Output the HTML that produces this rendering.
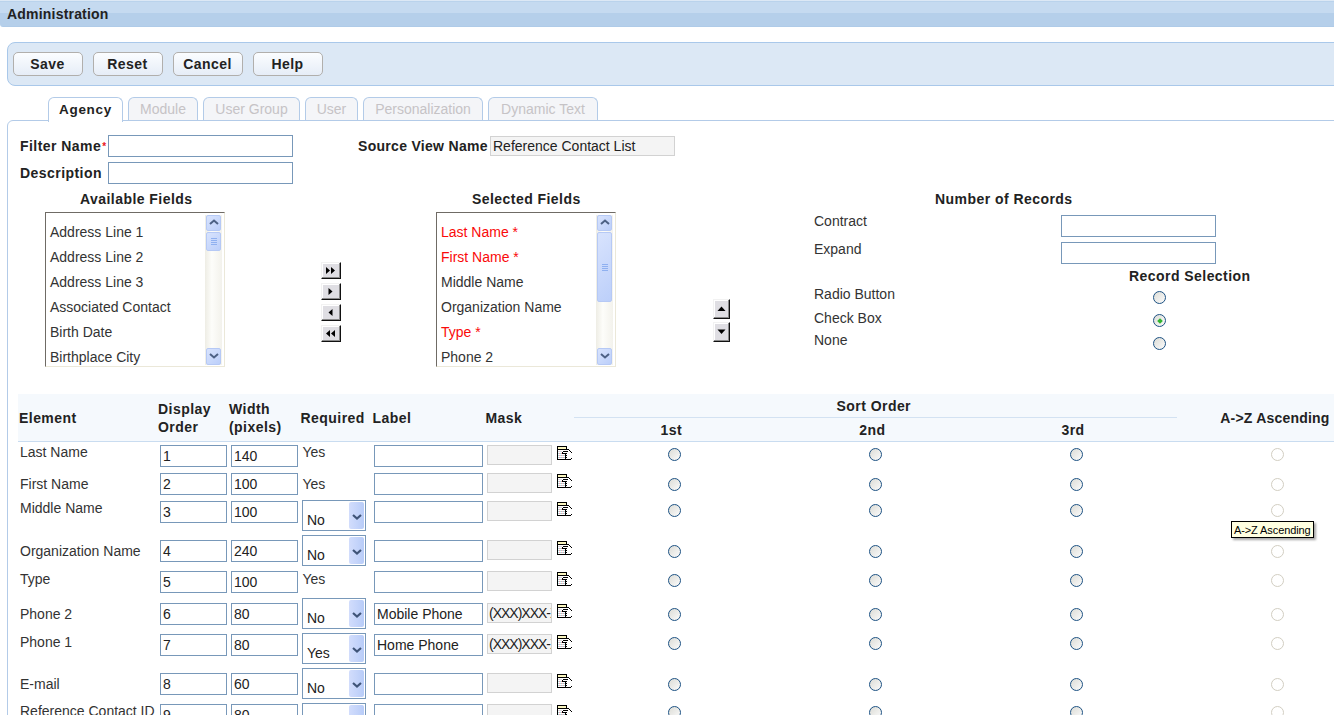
<!DOCTYPE html><html><head><meta charset="utf-8"><style>
*{box-sizing:border-box;margin:0;padding:0}
html,body{width:1334px;height:715px;overflow:hidden;background:#fff;font-family:"Liberation Sans",sans-serif;font-size:14px;color:#333}
.a{position:absolute;white-space:nowrap;line-height:16px}
.b{position:absolute;white-space:nowrap;font-weight:bold;font-size:14px;line-height:15px;letter-spacing:0.45px;color:#222}
#hdr{position:absolute;left:0;top:0;width:1334px;height:27px;background:linear-gradient(#bad3ec 0,#bad3ec 1px,#c5daf0 1px,#c5daf0 12px,#b5cfea 12px,#b5cfea 25px,#afcbe8 25px);border-top:1px solid #dce8f5;border-bottom-left-radius:3px}
#hdr span{position:absolute;left:7px;top:5px;font-weight:bold;font-size:14px;line-height:16px;color:#222;letter-spacing:0.2px}
#tb{position:absolute;left:7px;top:42px;width:1400px;height:44px;background:#dce8f5;border:1px solid #a9c8ea;border-radius:8px}
.btn{position:absolute;top:52px;width:70px;height:24px;border:1px solid #b1afac;border-radius:5px;background:linear-gradient(#fbfdff,#e6edf7);font-weight:bold;font-size:14px;letter-spacing:0.45px;color:#222;text-align:center;line-height:23px;padding-right:1px}
.tab{position:absolute;top:97px;height:23px;border:1px solid #b3cbe8;border-bottom:none;border-radius:6px 6px 0 0;background:#f4f5f8;color:#c6c3c6;font-size:14px;text-align:center;line-height:16px;padding-top:3px}
.tab.act{background:#fff;color:#222;font-weight:bold;font-size:13.5px;letter-spacing:0.7px;height:25px;z-index:2;line-height:15px;padding-top:4px}
#panel{position:absolute;left:7px;top:120px;width:1400px;height:700px;border:1px solid #b3cbe8;border-radius:6px 0 0 0;background:#fff}
.in{position:absolute;border:1px solid #7898b9;background:#fff;height:22px;font-size:14px;color:#222;padding-left:2px;line-height:20px;white-space:nowrap;overflow:hidden}
.ro{position:absolute;border:1px solid #d2d2d2;background:#f4f4f4;height:20px;font-size:14px;color:#222;padding-left:1px;line-height:18px;overflow:hidden;white-space:nowrap}
.lb{position:absolute;border:1px solid #6f6b65;border-right-color:#ebe8d9;border-bottom-color:#ebe8d9;background:#fff;overflow:hidden}
.lb .it{position:absolute;left:4px;font-size:14px;line-height:16px;color:#333;white-space:nowrap}
.red{color:#fa0a0a !important}
.sb{position:absolute;left:159px;top:2px;width:17px;bottom:1px;background:linear-gradient(90deg,#eeede5,#fdfdfa 40%,#f3f2ec)}
.sbb{position:absolute;left:1px;width:15px;border:1px solid #b6c9f5;border-radius:2px;background:linear-gradient(135deg,#d8e3fd,#bccffa)}
.arb{position:absolute;width:20px;height:17px;border-top:1px solid #f2f2f2;border-left:1px solid #f2f2f2;border-right:1px solid #111;border-bottom:1px solid #111;background:#dfdee3;box-shadow:inset -1px -1px 0 #8a8a8a,inset 1px 1px 0 #fff}
.rad{position:absolute;width:13px;height:13px;border-radius:50%;border:1px solid #1d5283;background:linear-gradient(135deg,#dcdcd6,#fbfbfb)}
.rad.dis{border-color:#d2cec2;background:#fff}
.sel{position:absolute;width:64px;height:31px;border:1px solid #7898b9;background:#fff;font-size:14px;color:#222}
.sel span{position:absolute;left:4px;line-height:16px}
.sel i{position:absolute;left:46px;top:1px;width:15px;height:27px;border-radius:2px;background:linear-gradient(90deg,#d2ddfc,#b8ccf8)}
.ico{position:absolute;width:16px;height:15px}
#hd{position:absolute;left:18px;top:394px;width:1320px;height:48px;background:#f5f9fd;border-bottom:1px solid #c9dcf0}
</style></head><body>
<div id="hdr"><span>Administration</span></div>
<div id="tb"></div>
<div class="btn" style="left:13px">Save</div>
<div class="btn" style="left:93px">Reset</div>
<div class="btn" style="left:173px">Cancel</div>
<div class="btn" style="left:253px">Help</div>
<div id="panel"></div>
<div class="tab act" style="left:48px;width:75px">Agency</div>
<div class="tab" style="left:128px;width:70px">Module</div>
<div class="tab" style="left:203px;width:97px">User Group</div>
<div class="tab" style="left:305px;width:53px">User</div>
<div class="tab" style="left:363px;width:120px">Personalization</div>
<div class="tab" style="left:488px;width:110px">Dynamic Text</div>
<div class="b" style="left:20px;top:138.5px;">Filter Name<span style="color:#e8161e;font-size:10px;position:relative;top:-1px;left:1px;letter-spacing:0">*</span></div>
<div class="in" style="left:108px;top:135px;width:185px"></div>
<div class="b" style="left:20px;top:165.7px;">Description</div>
<div class="in" style="left:108px;top:162px;width:185px"></div>
<div class="b" style="left:358px;top:138.9px;letter-spacing:0.3px">Source View Name</div>
<div class="ro" style="left:490px;top:136px;width:185px;line-height:18px;padding-left:2px">Reference Contact List</div>
<div class="b" style="left:80px;top:191.8px;">Available Fields</div>
<div class="lb" style="left:45px;top:212px;width:180px;height:155px">
<div class="it" style="top:11px">Address Line 1</div>
<div class="it" style="top:36px">Address Line 2</div>
<div class="it" style="top:61px">Address Line 3</div>
<div class="it" style="top:86px">Associated Contact</div>
<div class="it" style="top:111px">Birth Date</div>
<div class="it" style="top:136px">Birthplace City</div>
<div class="sb">
<div class="sbb" style="top:0px;height:16px"><svg style="position:absolute;left:1.5px;top:3px" width="10" height="6"><path d="M1 5 L5 1.5 L9 5" stroke="#4d6185" stroke-width="2" fill="none"/></svg></div>
<div class="sbb" style="top:17px;height:19px"><svg style="position:absolute;left:3.5px;top:4px" width="7" height="9"><path d="M0 1.5H6M0 3.5H6M0 5.5H6M0 7.5H6" stroke="#8fb0f0" stroke-width="1"/></svg></div>
<div class="sbb" style="top:133px;height:17px"><svg style="position:absolute;left:1.5px;top:4px" width="10" height="7"><path d="M1 1 L5 4.5 L9 1" stroke="#4d6185" stroke-width="2" fill="none"/></svg></div>
</div></div>
<div class="b" style="left:472px;top:191.8px;">Selected Fields</div>
<div class="lb" style="left:436px;top:212px;width:180px;height:155px">
<div class="it red" style="top:11px">Last Name *</div>
<div class="it red" style="top:36px">First Name *</div>
<div class="it" style="top:61px">Middle Name</div>
<div class="it" style="top:86px">Organization Name</div>
<div class="it red" style="top:111px">Type *</div>
<div class="it" style="top:136px">Phone 2</div>
<div class="sb">
<div class="sbb" style="top:0px;height:16px"><svg style="position:absolute;left:1.5px;top:3px" width="10" height="6"><path d="M1 5 L5 1.5 L9 5" stroke="#4d6185" stroke-width="2" fill="none"/></svg></div>
<div class="sbb" style="top:17px;height:70px"><svg style="position:absolute;left:3.5px;top:30px" width="7" height="9"><path d="M0 1.5H6M0 3.5H6M0 5.5H6M0 7.5H6" stroke="#8fb0f0" stroke-width="1"/></svg></div>
<div class="sbb" style="top:133px;height:17px"><svg style="position:absolute;left:1.5px;top:4px" width="10" height="7"><path d="M1 1 L5 4.5 L9 1" stroke="#4d6185" stroke-width="2" fill="none"/></svg></div>
</div></div>
<div class="arb" style="left:321px;top:262px"><svg style="position:absolute;left:0;top:0" width="18" height="15"><path d="M4 4 L8 7.5 L4 11 ZM9 4 L13 7.5 L9 11 Z" fill="#000"/></svg></div>
<div class="arb" style="left:321px;top:283px"><svg style="position:absolute;left:0;top:0" width="18" height="15"><path d="M6.5 4 L10.5 7.5 L6.5 11 Z" fill="#000"/></svg></div>
<div class="arb" style="left:321px;top:304px"><svg style="position:absolute;left:0;top:0" width="18" height="15"><path d="M10.5 4 L6.5 7.5 L10.5 11 Z" fill="#000"/></svg></div>
<div class="arb" style="left:321px;top:325px"><svg style="position:absolute;left:0;top:0" width="18" height="15"><path d="M8 4 L4 7.5 L8 11 ZM13 4 L9 7.5 L13 11 Z" fill="#000"/></svg></div>
<div class="arb" style="left:713px;top:299px;width:17px;height:20px"><svg style="position:absolute;left:0;top:0" width="15" height="18"><path d="M3.5 11.0 L7.5 6.5 L11.5 11.0 Z" fill="#000"/></svg></div>
<div class="arb" style="left:713px;top:322px;width:17px;height:20px"><svg style="position:absolute;left:0;top:0" width="15" height="18"><path d="M3.5 6.5 L7.5 11.0 L11.5 6.5 Z" fill="#000"/></svg></div>
<div class="b" style="left:935px;top:191.7px;">Number of Records</div>
<div class="a" style="left:814px;top:213.1px;">Contract</div>
<div class="in" style="left:1061px;top:215px;width:155px"></div>
<div class="a" style="left:814px;top:241.4px;">Expand</div>
<div class="in" style="left:1061px;top:242px;width:155px"></div>
<div class="b" style="left:1129px;top:268.7px;">Record Selection</div>
<div class="a" style="left:814px;top:286.3px;">Radio Button</div>
<div class="a" style="left:814px;top:309.5px;">Check Box</div>
<div class="a" style="left:814px;top:332.4px;">None</div>
<div class="rad" style="left:1153px;top:291px"></div>
<div class="rad" style="left:1153px;top:314px"><div style="position:absolute;left:3.5px;top:3.5px;width:4px;height:4px;background:#2fb52f;transform:rotate(45deg)"></div></div>
<div class="rad" style="left:1153px;top:337px"></div>
<div id="hd"></div>
<div style="position:absolute;left:574px;top:417px;width:603px;height:1px;background:#d3e2f2"></div>
<div class="b" style="left:19px;top:411.4px;">Element</div>
<div class="b" style="left:158px;top:402.3px;line-height:18px;top:400.3px">Display<br>Order</div>
<div class="b" style="left:229px;top:402.3px;line-height:18px;top:400.3px">Width<br>(pixels)</div>
<div class="b" style="left:300.5px;top:410.9px;">Required</div>
<div class="b" style="left:372.5px;top:410.9px;">Label</div>
<div class="b" style="left:485.5px;top:410.9px;">Mask</div>
<div class="b" style="left:836.5px;top:398.6px;">Sort Order</div>
<div class="b" style="left:660.5px;top:423px;">1st</div>
<div class="b" style="left:859.3px;top:423px;">2nd</div>
<div class="b" style="left:1061.4px;top:423px;">3rd</div>
<div class="b" style="left:1220.3px;top:411.2px;letter-spacing:0.2px">A-&gt;Z Ascending</div>
<div class="a" style="left:20px;top:444px;">Last Name</div>
<div class="in" style="left:160px;top:445px;width:67px">1</div>
<div class="in" style="left:231px;top:445px;width:67px">140</div>
<div class="a" style="left:302.5px;top:444.2px;">Yes</div>
<div class="in" style="left:374px;top:445px;width:109px"></div>
<div class="ro" style="left:487px;top:445px;width:65px;letter-spacing:-1px"></div>
<svg class="ico" style="left:557px;top:446px" width="15" height="14" shape-rendering="crispEdges"><rect x="1" y="4" width="7" height="9" fill="#fff"/><rect x="0" y="0" width="10" height="1" fill="#000"/><rect x="0" y="0" width="1" height="14" fill="#000"/><rect x="9" y="0" width="1" height="4" fill="#000"/><rect x="1" y="1" width="8" height="2" fill="#fbf6c0"/><rect x="0" y="3" width="12" height="1" fill="#000"/><rect x="12" y="4" width="1" height="1" fill="#000"/><rect x="13" y="5" width="1" height="1" fill="#000"/><rect x="14" y="6" width="1" height="1" fill="#000"/><rect x="6" y="5" width="5" height="1" fill="#000"/><rect x="5" y="6" width="1" height="1" fill="#000"/><rect x="5" y="7" width="5" height="1" fill="#000"/><rect x="8" y="7" width="1" height="7" fill="#000"/><rect x="9" y="9" width="1" height="1" fill="#000"/><rect x="9" y="11" width="1" height="1" fill="#000"/><rect x="0" y="13" width="14" height="1" fill="#000"/><rect x="14" y="12" width="1" height="1" fill="#000"/><rect x="1" y="5" width="4" height="1" fill="#ddd8e0"/><rect x="1" y="7" width="1" height="1" fill="#a8dce0"/><rect x="2" y="7" width="1" height="1" fill="#eaa8b0"/><rect x="3" y="7" width="1" height="1" fill="#a8dce0"/><rect x="4" y="7" width="1" height="1" fill="#eaa8b0"/><rect x="1" y="9" width="1" height="1" fill="#a8dce0"/><rect x="2" y="9" width="1" height="1" fill="#eaa8b0"/><rect x="3" y="9" width="1" height="1" fill="#a8dce0"/><rect x="4" y="9" width="1" height="1" fill="#eaa8b0"/><rect x="5" y="9" width="1" height="1" fill="#a8dce0"/><rect x="6" y="9" width="1" height="1" fill="#eaa8b0"/><rect x="7" y="9" width="1" height="1" fill="#a8dce0"/><rect x="1" y="11" width="1" height="1" fill="#a8dce0"/><rect x="2" y="11" width="1" height="1" fill="#eaa8b0"/><rect x="3" y="11" width="1" height="1" fill="#a8dce0"/><rect x="4" y="11" width="1" height="1" fill="#eaa8b0"/><rect x="5" y="11" width="1" height="1" fill="#a8dce0"/><rect x="6" y="11" width="1" height="1" fill="#eaa8b0"/><rect x="7" y="11" width="1" height="1" fill="#a8dce0"/></svg>
<div class="rad" style="left:668.0px;top:448.0px"></div>
<div class="rad" style="left:869.0px;top:448.0px"></div>
<div class="rad" style="left:1070.0px;top:448.0px"></div>
<div class="rad dis" style="left:1270.8px;top:448.0px"></div>
<div class="a" style="left:20px;top:476.4px;">First Name</div>
<div class="in" style="left:160px;top:473px;width:67px">2</div>
<div class="in" style="left:231px;top:473px;width:67px">100</div>
<div class="a" style="left:302.5px;top:476.4px;">Yes</div>
<div class="in" style="left:374px;top:473px;width:109px"></div>
<div class="ro" style="left:487px;top:473px;width:65px;letter-spacing:-1px"></div>
<svg class="ico" style="left:557px;top:474px" width="15" height="14" shape-rendering="crispEdges"><rect x="1" y="4" width="7" height="9" fill="#fff"/><rect x="0" y="0" width="10" height="1" fill="#000"/><rect x="0" y="0" width="1" height="14" fill="#000"/><rect x="9" y="0" width="1" height="4" fill="#000"/><rect x="1" y="1" width="8" height="2" fill="#fbf6c0"/><rect x="0" y="3" width="12" height="1" fill="#000"/><rect x="12" y="4" width="1" height="1" fill="#000"/><rect x="13" y="5" width="1" height="1" fill="#000"/><rect x="14" y="6" width="1" height="1" fill="#000"/><rect x="6" y="5" width="5" height="1" fill="#000"/><rect x="5" y="6" width="1" height="1" fill="#000"/><rect x="5" y="7" width="5" height="1" fill="#000"/><rect x="8" y="7" width="1" height="7" fill="#000"/><rect x="9" y="9" width="1" height="1" fill="#000"/><rect x="9" y="11" width="1" height="1" fill="#000"/><rect x="0" y="13" width="14" height="1" fill="#000"/><rect x="14" y="12" width="1" height="1" fill="#000"/><rect x="1" y="5" width="4" height="1" fill="#ddd8e0"/><rect x="1" y="7" width="1" height="1" fill="#a8dce0"/><rect x="2" y="7" width="1" height="1" fill="#eaa8b0"/><rect x="3" y="7" width="1" height="1" fill="#a8dce0"/><rect x="4" y="7" width="1" height="1" fill="#eaa8b0"/><rect x="1" y="9" width="1" height="1" fill="#a8dce0"/><rect x="2" y="9" width="1" height="1" fill="#eaa8b0"/><rect x="3" y="9" width="1" height="1" fill="#a8dce0"/><rect x="4" y="9" width="1" height="1" fill="#eaa8b0"/><rect x="5" y="9" width="1" height="1" fill="#a8dce0"/><rect x="6" y="9" width="1" height="1" fill="#eaa8b0"/><rect x="7" y="9" width="1" height="1" fill="#a8dce0"/><rect x="1" y="11" width="1" height="1" fill="#a8dce0"/><rect x="2" y="11" width="1" height="1" fill="#eaa8b0"/><rect x="3" y="11" width="1" height="1" fill="#a8dce0"/><rect x="4" y="11" width="1" height="1" fill="#eaa8b0"/><rect x="5" y="11" width="1" height="1" fill="#a8dce0"/><rect x="6" y="11" width="1" height="1" fill="#eaa8b0"/><rect x="7" y="11" width="1" height="1" fill="#a8dce0"/></svg>
<div class="rad" style="left:668.0px;top:478.0px"></div>
<div class="rad" style="left:869.0px;top:478.0px"></div>
<div class="rad" style="left:1070.0px;top:478.0px"></div>
<div class="rad dis" style="left:1270.8px;top:478.0px"></div>
<div class="a" style="left:20px;top:499.79999999999995px;">Middle Name</div>
<div class="in" style="left:160px;top:501px;width:67px">3</div>
<div class="in" style="left:231px;top:501px;width:67px">100</div>
<div class="sel" style="left:302px;top:500px"><span style="top:11px">No</span><i><svg style="position:absolute;left:2.5px;top:11.5px" width="10" height="7"><path d="M1 1 L5 4.5 L9 1" stroke="#3f5478" stroke-width="2.2" fill="none"/></svg></i></div>
<div class="in" style="left:374px;top:501px;width:109px"></div>
<div class="ro" style="left:487px;top:501px;width:65px;letter-spacing:-1px"></div>
<svg class="ico" style="left:557px;top:502px" width="15" height="14" shape-rendering="crispEdges"><rect x="1" y="4" width="7" height="9" fill="#fff"/><rect x="0" y="0" width="10" height="1" fill="#000"/><rect x="0" y="0" width="1" height="14" fill="#000"/><rect x="9" y="0" width="1" height="4" fill="#000"/><rect x="1" y="1" width="8" height="2" fill="#fbf6c0"/><rect x="0" y="3" width="12" height="1" fill="#000"/><rect x="12" y="4" width="1" height="1" fill="#000"/><rect x="13" y="5" width="1" height="1" fill="#000"/><rect x="14" y="6" width="1" height="1" fill="#000"/><rect x="6" y="5" width="5" height="1" fill="#000"/><rect x="5" y="6" width="1" height="1" fill="#000"/><rect x="5" y="7" width="5" height="1" fill="#000"/><rect x="8" y="7" width="1" height="7" fill="#000"/><rect x="9" y="9" width="1" height="1" fill="#000"/><rect x="9" y="11" width="1" height="1" fill="#000"/><rect x="0" y="13" width="14" height="1" fill="#000"/><rect x="14" y="12" width="1" height="1" fill="#000"/><rect x="1" y="5" width="4" height="1" fill="#ddd8e0"/><rect x="1" y="7" width="1" height="1" fill="#a8dce0"/><rect x="2" y="7" width="1" height="1" fill="#eaa8b0"/><rect x="3" y="7" width="1" height="1" fill="#a8dce0"/><rect x="4" y="7" width="1" height="1" fill="#eaa8b0"/><rect x="1" y="9" width="1" height="1" fill="#a8dce0"/><rect x="2" y="9" width="1" height="1" fill="#eaa8b0"/><rect x="3" y="9" width="1" height="1" fill="#a8dce0"/><rect x="4" y="9" width="1" height="1" fill="#eaa8b0"/><rect x="5" y="9" width="1" height="1" fill="#a8dce0"/><rect x="6" y="9" width="1" height="1" fill="#eaa8b0"/><rect x="7" y="9" width="1" height="1" fill="#a8dce0"/><rect x="1" y="11" width="1" height="1" fill="#a8dce0"/><rect x="2" y="11" width="1" height="1" fill="#eaa8b0"/><rect x="3" y="11" width="1" height="1" fill="#a8dce0"/><rect x="4" y="11" width="1" height="1" fill="#eaa8b0"/><rect x="5" y="11" width="1" height="1" fill="#a8dce0"/><rect x="6" y="11" width="1" height="1" fill="#eaa8b0"/><rect x="7" y="11" width="1" height="1" fill="#a8dce0"/></svg>
<div class="rad" style="left:668.0px;top:504.0px"></div>
<div class="rad" style="left:869.0px;top:504.0px"></div>
<div class="rad" style="left:1070.0px;top:504.0px"></div>
<div class="rad dis" style="left:1270.8px;top:504.0px"></div>
<div class="a" style="left:20px;top:543px;">Organization Name</div>
<div class="in" style="left:160px;top:540px;width:67px">4</div>
<div class="in" style="left:231px;top:540px;width:67px">240</div>
<div class="sel" style="left:302px;top:535px"><span style="top:11px">No</span><i><svg style="position:absolute;left:2.5px;top:11.5px" width="10" height="7"><path d="M1 1 L5 4.5 L9 1" stroke="#3f5478" stroke-width="2.2" fill="none"/></svg></i></div>
<div class="in" style="left:374px;top:540px;width:109px"></div>
<div class="ro" style="left:487px;top:540px;width:65px;letter-spacing:-1px"></div>
<svg class="ico" style="left:557px;top:541px" width="15" height="14" shape-rendering="crispEdges"><rect x="1" y="4" width="7" height="9" fill="#fff"/><rect x="0" y="0" width="10" height="1" fill="#000"/><rect x="0" y="0" width="1" height="14" fill="#000"/><rect x="9" y="0" width="1" height="4" fill="#000"/><rect x="1" y="1" width="8" height="2" fill="#fbf6c0"/><rect x="0" y="3" width="12" height="1" fill="#000"/><rect x="12" y="4" width="1" height="1" fill="#000"/><rect x="13" y="5" width="1" height="1" fill="#000"/><rect x="14" y="6" width="1" height="1" fill="#000"/><rect x="6" y="5" width="5" height="1" fill="#000"/><rect x="5" y="6" width="1" height="1" fill="#000"/><rect x="5" y="7" width="5" height="1" fill="#000"/><rect x="8" y="7" width="1" height="7" fill="#000"/><rect x="9" y="9" width="1" height="1" fill="#000"/><rect x="9" y="11" width="1" height="1" fill="#000"/><rect x="0" y="13" width="14" height="1" fill="#000"/><rect x="14" y="12" width="1" height="1" fill="#000"/><rect x="1" y="5" width="4" height="1" fill="#ddd8e0"/><rect x="1" y="7" width="1" height="1" fill="#a8dce0"/><rect x="2" y="7" width="1" height="1" fill="#eaa8b0"/><rect x="3" y="7" width="1" height="1" fill="#a8dce0"/><rect x="4" y="7" width="1" height="1" fill="#eaa8b0"/><rect x="1" y="9" width="1" height="1" fill="#a8dce0"/><rect x="2" y="9" width="1" height="1" fill="#eaa8b0"/><rect x="3" y="9" width="1" height="1" fill="#a8dce0"/><rect x="4" y="9" width="1" height="1" fill="#eaa8b0"/><rect x="5" y="9" width="1" height="1" fill="#a8dce0"/><rect x="6" y="9" width="1" height="1" fill="#eaa8b0"/><rect x="7" y="9" width="1" height="1" fill="#a8dce0"/><rect x="1" y="11" width="1" height="1" fill="#a8dce0"/><rect x="2" y="11" width="1" height="1" fill="#eaa8b0"/><rect x="3" y="11" width="1" height="1" fill="#a8dce0"/><rect x="4" y="11" width="1" height="1" fill="#eaa8b0"/><rect x="5" y="11" width="1" height="1" fill="#a8dce0"/><rect x="6" y="11" width="1" height="1" fill="#eaa8b0"/><rect x="7" y="11" width="1" height="1" fill="#a8dce0"/></svg>
<div class="rad" style="left:668.0px;top:545.0px"></div>
<div class="rad" style="left:869.0px;top:545.0px"></div>
<div class="rad" style="left:1070.0px;top:545.0px"></div>
<div class="rad dis" style="left:1270.8px;top:545.0px"></div>
<div class="a" style="left:20px;top:570.5px;">Type</div>
<div class="in" style="left:160px;top:571px;width:67px">5</div>
<div class="in" style="left:231px;top:571px;width:67px">100</div>
<div class="a" style="left:302.5px;top:570.5px;">Yes</div>
<div class="in" style="left:374px;top:571px;width:109px"></div>
<div class="ro" style="left:487px;top:571px;width:65px;letter-spacing:-1px"></div>
<svg class="ico" style="left:557px;top:572px" width="15" height="14" shape-rendering="crispEdges"><rect x="1" y="4" width="7" height="9" fill="#fff"/><rect x="0" y="0" width="10" height="1" fill="#000"/><rect x="0" y="0" width="1" height="14" fill="#000"/><rect x="9" y="0" width="1" height="4" fill="#000"/><rect x="1" y="1" width="8" height="2" fill="#fbf6c0"/><rect x="0" y="3" width="12" height="1" fill="#000"/><rect x="12" y="4" width="1" height="1" fill="#000"/><rect x="13" y="5" width="1" height="1" fill="#000"/><rect x="14" y="6" width="1" height="1" fill="#000"/><rect x="6" y="5" width="5" height="1" fill="#000"/><rect x="5" y="6" width="1" height="1" fill="#000"/><rect x="5" y="7" width="5" height="1" fill="#000"/><rect x="8" y="7" width="1" height="7" fill="#000"/><rect x="9" y="9" width="1" height="1" fill="#000"/><rect x="9" y="11" width="1" height="1" fill="#000"/><rect x="0" y="13" width="14" height="1" fill="#000"/><rect x="14" y="12" width="1" height="1" fill="#000"/><rect x="1" y="5" width="4" height="1" fill="#ddd8e0"/><rect x="1" y="7" width="1" height="1" fill="#a8dce0"/><rect x="2" y="7" width="1" height="1" fill="#eaa8b0"/><rect x="3" y="7" width="1" height="1" fill="#a8dce0"/><rect x="4" y="7" width="1" height="1" fill="#eaa8b0"/><rect x="1" y="9" width="1" height="1" fill="#a8dce0"/><rect x="2" y="9" width="1" height="1" fill="#eaa8b0"/><rect x="3" y="9" width="1" height="1" fill="#a8dce0"/><rect x="4" y="9" width="1" height="1" fill="#eaa8b0"/><rect x="5" y="9" width="1" height="1" fill="#a8dce0"/><rect x="6" y="9" width="1" height="1" fill="#eaa8b0"/><rect x="7" y="9" width="1" height="1" fill="#a8dce0"/><rect x="1" y="11" width="1" height="1" fill="#a8dce0"/><rect x="2" y="11" width="1" height="1" fill="#eaa8b0"/><rect x="3" y="11" width="1" height="1" fill="#a8dce0"/><rect x="4" y="11" width="1" height="1" fill="#eaa8b0"/><rect x="5" y="11" width="1" height="1" fill="#a8dce0"/><rect x="6" y="11" width="1" height="1" fill="#eaa8b0"/><rect x="7" y="11" width="1" height="1" fill="#a8dce0"/></svg>
<div class="rad" style="left:668.0px;top:574.0px"></div>
<div class="rad" style="left:869.0px;top:574.0px"></div>
<div class="rad" style="left:1070.0px;top:574.0px"></div>
<div class="rad dis" style="left:1270.8px;top:574.0px"></div>
<div class="a" style="left:20px;top:606.1px;">Phone 2</div>
<div class="in" style="left:160px;top:603px;width:67px">6</div>
<div class="in" style="left:231px;top:603px;width:67px">80</div>
<div class="sel" style="left:302px;top:598px"><span style="top:11px">No</span><i><svg style="position:absolute;left:2.5px;top:11.5px" width="10" height="7"><path d="M1 1 L5 4.5 L9 1" stroke="#3f5478" stroke-width="2.2" fill="none"/></svg></i></div>
<div class="in" style="left:374px;top:603px;width:109px">Mobile Phone</div>
<div class="ro" style="left:487px;top:603px;width:65px;letter-spacing:-1px">(XXX)XXX-XXXX</div>
<svg class="ico" style="left:557px;top:604px" width="15" height="14" shape-rendering="crispEdges"><rect x="1" y="4" width="7" height="9" fill="#fff"/><rect x="0" y="0" width="10" height="1" fill="#000"/><rect x="0" y="0" width="1" height="14" fill="#000"/><rect x="9" y="0" width="1" height="4" fill="#000"/><rect x="1" y="1" width="8" height="2" fill="#fbf6c0"/><rect x="0" y="3" width="12" height="1" fill="#000"/><rect x="12" y="4" width="1" height="1" fill="#000"/><rect x="13" y="5" width="1" height="1" fill="#000"/><rect x="14" y="6" width="1" height="1" fill="#000"/><rect x="6" y="5" width="5" height="1" fill="#000"/><rect x="5" y="6" width="1" height="1" fill="#000"/><rect x="5" y="7" width="5" height="1" fill="#000"/><rect x="8" y="7" width="1" height="7" fill="#000"/><rect x="9" y="9" width="1" height="1" fill="#000"/><rect x="9" y="11" width="1" height="1" fill="#000"/><rect x="0" y="13" width="14" height="1" fill="#000"/><rect x="14" y="12" width="1" height="1" fill="#000"/><rect x="1" y="5" width="4" height="1" fill="#ddd8e0"/><rect x="1" y="7" width="1" height="1" fill="#a8dce0"/><rect x="2" y="7" width="1" height="1" fill="#eaa8b0"/><rect x="3" y="7" width="1" height="1" fill="#a8dce0"/><rect x="4" y="7" width="1" height="1" fill="#eaa8b0"/><rect x="1" y="9" width="1" height="1" fill="#a8dce0"/><rect x="2" y="9" width="1" height="1" fill="#eaa8b0"/><rect x="3" y="9" width="1" height="1" fill="#a8dce0"/><rect x="4" y="9" width="1" height="1" fill="#eaa8b0"/><rect x="5" y="9" width="1" height="1" fill="#a8dce0"/><rect x="6" y="9" width="1" height="1" fill="#eaa8b0"/><rect x="7" y="9" width="1" height="1" fill="#a8dce0"/><rect x="1" y="11" width="1" height="1" fill="#a8dce0"/><rect x="2" y="11" width="1" height="1" fill="#eaa8b0"/><rect x="3" y="11" width="1" height="1" fill="#a8dce0"/><rect x="4" y="11" width="1" height="1" fill="#eaa8b0"/><rect x="5" y="11" width="1" height="1" fill="#a8dce0"/><rect x="6" y="11" width="1" height="1" fill="#eaa8b0"/><rect x="7" y="11" width="1" height="1" fill="#a8dce0"/></svg>
<div class="rad" style="left:668.0px;top:608.0px"></div>
<div class="rad" style="left:869.0px;top:608.0px"></div>
<div class="rad" style="left:1070.0px;top:608.0px"></div>
<div class="rad dis" style="left:1270.8px;top:608.0px"></div>
<div class="a" style="left:20px;top:633.9px;">Phone 1</div>
<div class="in" style="left:160px;top:634px;width:67px">7</div>
<div class="in" style="left:231px;top:634px;width:67px">80</div>
<div class="sel" style="left:302px;top:633px"><span style="top:11px">Yes</span><i><svg style="position:absolute;left:2.5px;top:11.5px" width="10" height="7"><path d="M1 1 L5 4.5 L9 1" stroke="#3f5478" stroke-width="2.2" fill="none"/></svg></i></div>
<div class="in" style="left:374px;top:634px;width:109px">Home Phone</div>
<div class="ro" style="left:487px;top:634px;width:65px;letter-spacing:-1px">(XXX)XXX-XXXX</div>
<svg class="ico" style="left:557px;top:635px" width="15" height="14" shape-rendering="crispEdges"><rect x="1" y="4" width="7" height="9" fill="#fff"/><rect x="0" y="0" width="10" height="1" fill="#000"/><rect x="0" y="0" width="1" height="14" fill="#000"/><rect x="9" y="0" width="1" height="4" fill="#000"/><rect x="1" y="1" width="8" height="2" fill="#fbf6c0"/><rect x="0" y="3" width="12" height="1" fill="#000"/><rect x="12" y="4" width="1" height="1" fill="#000"/><rect x="13" y="5" width="1" height="1" fill="#000"/><rect x="14" y="6" width="1" height="1" fill="#000"/><rect x="6" y="5" width="5" height="1" fill="#000"/><rect x="5" y="6" width="1" height="1" fill="#000"/><rect x="5" y="7" width="5" height="1" fill="#000"/><rect x="8" y="7" width="1" height="7" fill="#000"/><rect x="9" y="9" width="1" height="1" fill="#000"/><rect x="9" y="11" width="1" height="1" fill="#000"/><rect x="0" y="13" width="14" height="1" fill="#000"/><rect x="14" y="12" width="1" height="1" fill="#000"/><rect x="1" y="5" width="4" height="1" fill="#ddd8e0"/><rect x="1" y="7" width="1" height="1" fill="#a8dce0"/><rect x="2" y="7" width="1" height="1" fill="#eaa8b0"/><rect x="3" y="7" width="1" height="1" fill="#a8dce0"/><rect x="4" y="7" width="1" height="1" fill="#eaa8b0"/><rect x="1" y="9" width="1" height="1" fill="#a8dce0"/><rect x="2" y="9" width="1" height="1" fill="#eaa8b0"/><rect x="3" y="9" width="1" height="1" fill="#a8dce0"/><rect x="4" y="9" width="1" height="1" fill="#eaa8b0"/><rect x="5" y="9" width="1" height="1" fill="#a8dce0"/><rect x="6" y="9" width="1" height="1" fill="#eaa8b0"/><rect x="7" y="9" width="1" height="1" fill="#a8dce0"/><rect x="1" y="11" width="1" height="1" fill="#a8dce0"/><rect x="2" y="11" width="1" height="1" fill="#eaa8b0"/><rect x="3" y="11" width="1" height="1" fill="#a8dce0"/><rect x="4" y="11" width="1" height="1" fill="#eaa8b0"/><rect x="5" y="11" width="1" height="1" fill="#a8dce0"/><rect x="6" y="11" width="1" height="1" fill="#eaa8b0"/><rect x="7" y="11" width="1" height="1" fill="#a8dce0"/></svg>
<div class="rad" style="left:668.0px;top:637.0px"></div>
<div class="rad" style="left:869.0px;top:637.0px"></div>
<div class="rad" style="left:1070.0px;top:637.0px"></div>
<div class="rad dis" style="left:1270.8px;top:637.0px"></div>
<div class="a" style="left:20px;top:676.3px;">E-mail</div>
<div class="in" style="left:160px;top:673px;width:67px">8</div>
<div class="in" style="left:231px;top:673px;width:67px">60</div>
<div class="sel" style="left:302px;top:668px"><span style="top:11px">No</span><i><svg style="position:absolute;left:2.5px;top:11.5px" width="10" height="7"><path d="M1 1 L5 4.5 L9 1" stroke="#3f5478" stroke-width="2.2" fill="none"/></svg></i></div>
<div class="in" style="left:374px;top:673px;width:109px"></div>
<div class="ro" style="left:487px;top:673px;width:65px;letter-spacing:-1px"></div>
<svg class="ico" style="left:557px;top:674px" width="15" height="14" shape-rendering="crispEdges"><rect x="1" y="4" width="7" height="9" fill="#fff"/><rect x="0" y="0" width="10" height="1" fill="#000"/><rect x="0" y="0" width="1" height="14" fill="#000"/><rect x="9" y="0" width="1" height="4" fill="#000"/><rect x="1" y="1" width="8" height="2" fill="#fbf6c0"/><rect x="0" y="3" width="12" height="1" fill="#000"/><rect x="12" y="4" width="1" height="1" fill="#000"/><rect x="13" y="5" width="1" height="1" fill="#000"/><rect x="14" y="6" width="1" height="1" fill="#000"/><rect x="6" y="5" width="5" height="1" fill="#000"/><rect x="5" y="6" width="1" height="1" fill="#000"/><rect x="5" y="7" width="5" height="1" fill="#000"/><rect x="8" y="7" width="1" height="7" fill="#000"/><rect x="9" y="9" width="1" height="1" fill="#000"/><rect x="9" y="11" width="1" height="1" fill="#000"/><rect x="0" y="13" width="14" height="1" fill="#000"/><rect x="14" y="12" width="1" height="1" fill="#000"/><rect x="1" y="5" width="4" height="1" fill="#ddd8e0"/><rect x="1" y="7" width="1" height="1" fill="#a8dce0"/><rect x="2" y="7" width="1" height="1" fill="#eaa8b0"/><rect x="3" y="7" width="1" height="1" fill="#a8dce0"/><rect x="4" y="7" width="1" height="1" fill="#eaa8b0"/><rect x="1" y="9" width="1" height="1" fill="#a8dce0"/><rect x="2" y="9" width="1" height="1" fill="#eaa8b0"/><rect x="3" y="9" width="1" height="1" fill="#a8dce0"/><rect x="4" y="9" width="1" height="1" fill="#eaa8b0"/><rect x="5" y="9" width="1" height="1" fill="#a8dce0"/><rect x="6" y="9" width="1" height="1" fill="#eaa8b0"/><rect x="7" y="9" width="1" height="1" fill="#a8dce0"/><rect x="1" y="11" width="1" height="1" fill="#a8dce0"/><rect x="2" y="11" width="1" height="1" fill="#eaa8b0"/><rect x="3" y="11" width="1" height="1" fill="#a8dce0"/><rect x="4" y="11" width="1" height="1" fill="#eaa8b0"/><rect x="5" y="11" width="1" height="1" fill="#a8dce0"/><rect x="6" y="11" width="1" height="1" fill="#eaa8b0"/><rect x="7" y="11" width="1" height="1" fill="#a8dce0"/></svg>
<div class="rad" style="left:668.0px;top:678.0px"></div>
<div class="rad" style="left:869.0px;top:678.0px"></div>
<div class="rad" style="left:1070.0px;top:678.0px"></div>
<div class="rad dis" style="left:1270.8px;top:678.0px"></div>
<div class="a" style="left:20px;top:703px;">Reference Contact ID</div>
<div class="in" style="left:160px;top:704px;width:67px">9</div>
<div class="in" style="left:231px;top:704px;width:67px">80</div>
<div class="sel" style="left:302px;top:703px"><span style="top:11px"></span><i><svg style="position:absolute;left:2.5px;top:11.5px" width="10" height="7"><path d="M1 1 L5 4.5 L9 1" stroke="#3f5478" stroke-width="2.2" fill="none"/></svg></i></div>
<div class="in" style="left:374px;top:704px;width:109px"></div>
<div class="ro" style="left:487px;top:704px;width:65px;letter-spacing:-1px"></div>
<svg class="ico" style="left:557px;top:705px" width="15" height="14" shape-rendering="crispEdges"><rect x="1" y="4" width="7" height="9" fill="#fff"/><rect x="0" y="0" width="10" height="1" fill="#000"/><rect x="0" y="0" width="1" height="14" fill="#000"/><rect x="9" y="0" width="1" height="4" fill="#000"/><rect x="1" y="1" width="8" height="2" fill="#fbf6c0"/><rect x="0" y="3" width="12" height="1" fill="#000"/><rect x="12" y="4" width="1" height="1" fill="#000"/><rect x="13" y="5" width="1" height="1" fill="#000"/><rect x="14" y="6" width="1" height="1" fill="#000"/><rect x="6" y="5" width="5" height="1" fill="#000"/><rect x="5" y="6" width="1" height="1" fill="#000"/><rect x="5" y="7" width="5" height="1" fill="#000"/><rect x="8" y="7" width="1" height="7" fill="#000"/><rect x="9" y="9" width="1" height="1" fill="#000"/><rect x="9" y="11" width="1" height="1" fill="#000"/><rect x="0" y="13" width="14" height="1" fill="#000"/><rect x="14" y="12" width="1" height="1" fill="#000"/><rect x="1" y="5" width="4" height="1" fill="#ddd8e0"/><rect x="1" y="7" width="1" height="1" fill="#a8dce0"/><rect x="2" y="7" width="1" height="1" fill="#eaa8b0"/><rect x="3" y="7" width="1" height="1" fill="#a8dce0"/><rect x="4" y="7" width="1" height="1" fill="#eaa8b0"/><rect x="1" y="9" width="1" height="1" fill="#a8dce0"/><rect x="2" y="9" width="1" height="1" fill="#eaa8b0"/><rect x="3" y="9" width="1" height="1" fill="#a8dce0"/><rect x="4" y="9" width="1" height="1" fill="#eaa8b0"/><rect x="5" y="9" width="1" height="1" fill="#a8dce0"/><rect x="6" y="9" width="1" height="1" fill="#eaa8b0"/><rect x="7" y="9" width="1" height="1" fill="#a8dce0"/><rect x="1" y="11" width="1" height="1" fill="#a8dce0"/><rect x="2" y="11" width="1" height="1" fill="#eaa8b0"/><rect x="3" y="11" width="1" height="1" fill="#a8dce0"/><rect x="4" y="11" width="1" height="1" fill="#eaa8b0"/><rect x="5" y="11" width="1" height="1" fill="#a8dce0"/><rect x="6" y="11" width="1" height="1" fill="#eaa8b0"/><rect x="7" y="11" width="1" height="1" fill="#a8dce0"/></svg>
<div class="rad" style="left:668.0px;top:706.0px"></div>
<div class="rad" style="left:869.0px;top:706.0px"></div>
<div class="rad" style="left:1070.0px;top:706.0px"></div>
<div class="rad dis" style="left:1270.8px;top:706.0px"></div>
<div style="position:absolute;left:1233px;top:523px;width:83px;height:17px;background:rgba(0,0,0,0.35);filter:blur(1px)"></div>
<div style="position:absolute;left:1231px;top:521px;width:83px;height:17px;background:#ffffe1;border:1px solid #000;font-size:11px;line-height:14px;padding-left:2px;padding-top:1px;letter-spacing:-0.1px;color:#000;white-space:nowrap">A-&gt;Z Ascending</div>
</body></html>
